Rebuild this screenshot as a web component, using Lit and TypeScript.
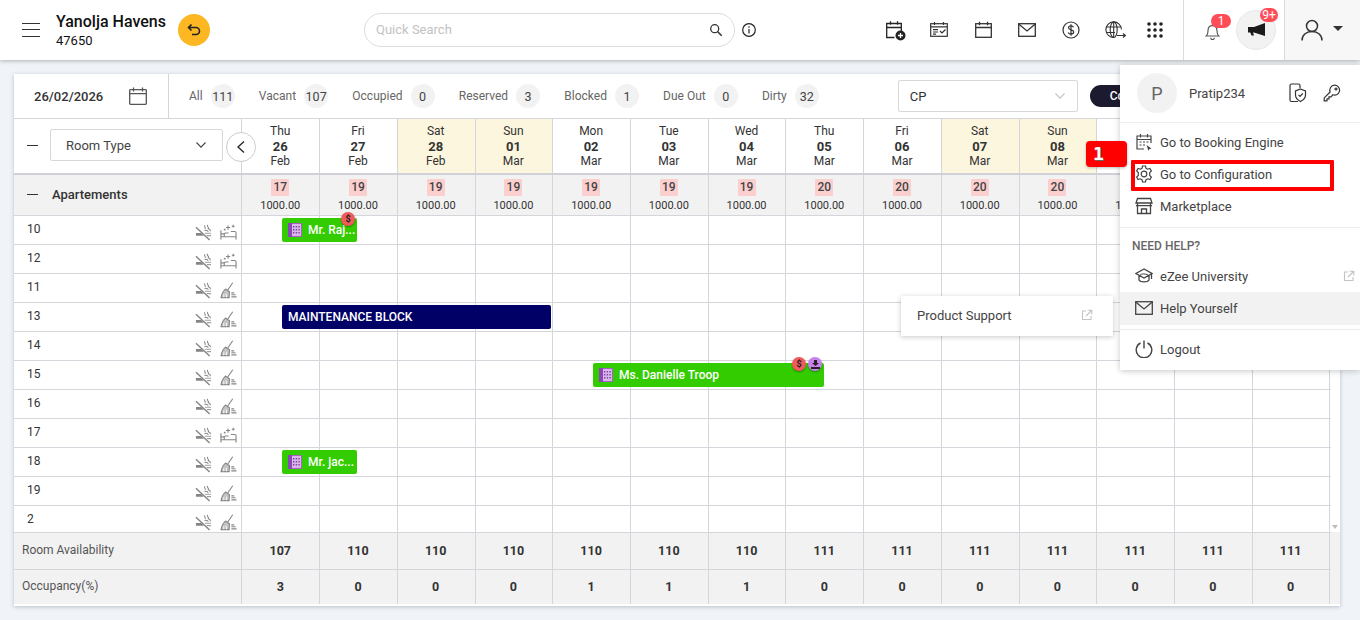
import { LitElement, html, css } from "lit";
import { customElement } from "lit/decorators.js";
import { styleMap } from "lit/directives/style-map.js";

const days = [
  ["Thu","26","Feb",17,107,3],["Fri","27","Feb",19,110,0],["Sat","28","Feb",19,110,0],["Sun","01","Mar",19,110,0],
  ["Mon","02","Mar",19,110,1],["Tue","03","Mar",19,110,1],["Wed","04","Mar",19,110,1],["Thu","05","Mar",20,111,0],
  ["Fri","06","Mar",20,111,0],["Sat","07","Mar",20,111,0],["Sun","08","Mar",20,111,0],["Mon","09","Mar",20,111,0],
  ["Tue","10","Mar",20,111,0],["Wed","11","Mar",20,111,0],
] as const;
const rooms: [string, boolean][] = [["10",true],["12",true],["11",false],["13",false],["14",false],["15",false],["16",false],["17",true],["18",false],["19",false],["2",false]];
const tabs: [string,string][] = [["All","111"],["Vacant","107"],["Occupied","0"],["Reserved","3"],["Blocked","1"],["Due Out","0"],["Dirty","32"]];
const bars: Record<string,{x:number;w:number;t:string;navy?:boolean;dots?:string[]}> = {
  "10": {x:268,w:75,t:"Mr. Raj...",dots:["s"]},
  "13": {x:268,w:269,t:"MAINTENANCE BLOCK",navy:true},
  "15": {x:579,w:231,t:"Ms. Danielle Troop",dots:["s","u"]},
  "18": {x:268,w:75,t:"Mr. jac..."},
};

const noSmoke = html`<svg class="ri" viewBox="0 0 18 18" fill="none" stroke="#858585" stroke-width="1.300"><path d="M1 3.500 15.500 17" stroke-width="1.500"/><path d="M1 9.500h5.500l3 3H1z" fill="#858585" stroke="none"/><path d="M10.500 9.800h6.500M12.500 12.300h4.500" stroke-width="1.100" stroke="#a0a0a0"/><path d="M10.500 1.500c-1.400 1.400 1.400 2 0 3.600M13.500 1c-1.600 1.400 1.800 2.400.6 4 1.400.3 2.300 1 2.300 2.600M10 7c1.600-.6 3.500-.3 4 1.200" stroke-width="1.100"/></svg>`;
const broom = html`<svg class="ri" viewBox="0 0 18 18" fill="none" stroke="#858585" stroke-width="1.200"><path d="M13.500 .8 8.200 8.500"/><path d="M5.800 7.500 10 10.300 9.600 16.500H1.200C1.800 12.500 3.500 9.300 5.800 7.500Z" fill="#c4c4c4"/><path d="M4 16.300V13M6.800 16.300v-3.800" stroke="#fff" stroke-width=".9"/><path d="M12 11.500h3M12 13.500h4.500M12 15.800h5.500"/></svg>`;
const bed = html`<svg class="ri" viewBox="0 0 18 18" fill="none" stroke="#858585" stroke-width="1.200"><path d="M1 6.500V16.500M1 13.500H17V16.500M17 13.500V9.500C17 8.500 16.300 8 15.500 8H11.500M1 10.500H4.500"/><path d="M4.500 13.500V10.700C4.500 10 5 9.500 5.700 9.500H9"/><path d="M8.500 1.500v4.500M6.300 3.700h4.500M14 .8v3M12.500 2.300h3M5 5v2M4 6h2" stroke-width="1.100"/></svg>`;
const building = html`<svg class="bi" viewBox="0 0 14 14"><rect width="14" height="14" rx="1" fill="#a45fc9"/><rect x="0" y="0" width="4" height="14" fill="#8d45b8"/><rect x="4" y="1" width="9" height="12" fill="#d7b8e8"/><path d="M5 3h1.400v1.400H5zM7.700 3h1.400v1.400H7.700zM10.400 3h1.400v1.400h-1.400zM5 6h1.400v1.400H5zM7.700 6h1.400v1.400H7.700zM10.400 6h1.400v1.400h-1.400zM5 9h1.400v1.400H5zM7.700 9h1.400v1.400H7.700zM10.400 9h1.400v1.400h-1.400z" fill="#8540ad"/></svg>`;
const ext = html`<svg class="ext" viewBox="0 0 12 12" fill="none" stroke="#c4c4c4" stroke-width="1.100"><path d="M5 2H1.500v8.500H10V7M6.500 1.200h4.300v4.300M10.500 1.500 5 7"/></svg>`;
const chev = html`<svg class="chev" viewBox="0 0 12 8" fill="none" stroke="currentColor" stroke-width="1.100"><path d="M1.500 1.500 6 6.200l4.500-4.700"/></svg>`;
const calendar = html`<svg class="ic18" viewBox="0 0 18 18" fill="none" stroke="#555" stroke-width="1.300"><rect x=".7" y="2.700" width="16.600" height="14.600" rx=".8"/><path d="M.7 6.700h16.600M4.500 .5v4M13.500 .5v4"/></svg>`;

@customElement("app-root")
export class AppRoot extends LitElement {
  static styles = css`
    :host { display:block; width:1360px; height:620px; position:relative; overflow:hidden; background:#f0f4f8; font-family:Roboto,"Liberation Sans",sans-serif; color:#333; font-size:13px; }
    svg { display:block; flex:none; }
    .top { height:60px; background:#fff; display:flex; align-items:center; padding-left:22px; box-shadow:0 1px 4px rgba(0,0,0,.28); position:relative; z-index:2; }
    .burger { width:18px; height:14px; border-top:1.500px solid #333; border-bottom:1.500px solid #333; position:relative; box-sizing:border-box; }
    .burger::after { content:""; position:absolute; left:0; right:0; top:4.500px; height:1.500px; background:#333; }
    .hotel { margin-left:16px; width:122px; color:#111; }
    .hotel b { display:block; font-size:16px; font-weight:500; line-height:20px; white-space:nowrap; }
    .hotel span { display:block; font-size:13px; line-height:16px; margin-top:1px; }
    .back { width:32px; height:32px; border-radius:50%; background:#fdb722; display:flex; align-items:center; justify-content:center; }
    .search { width:371px; height:34px; box-sizing:border-box; margin-left:154px; border:1px solid #dcdcdc; border-radius:17px; display:flex; align-items:center; justify-content:space-between; padding:0 11px 1px 11px; color:#c2c2c2; font-size:13px; }
    .info { margin-left:6px; }
    .tools { display:flex; margin-left:116px; align-items:center; }
    .tool { width:44px; display:flex; justify-content:center; color:#222; }
    .tool.last { margin-left:-4px; }
    .sep { width:1px; height:60px; background:#dcdcdc; margin-left:6px; }
    .bell { width:52px; position:relative; display:flex; justify-content:center; padding:2px 0 0 4px; box-sizing:border-box; }
    .count { position:absolute; background:#ff4d57; color:#fff; border-radius:8px; font-size:12px; line-height:14px; height:14px; text-align:center; }
    .bell .count { left:27px; top:-7px; width:20px; }
    .mega { width:40px; height:40px; border-radius:50%; background:#f2f2f2; border:1px solid #e8e8e8; box-sizing:border-box; position:relative; display:flex; align-items:center; justify-content:center; }
    .mega .count { left:23px; top:-3px; width:18px; }
    .sep2 { margin-left:8px; }
    .me { flex:1; height:60px; background:#f7f7f7; display:flex; align-items:center; padding-left:16px; gap:10px; }
    .caret { width:0; height:0; border:5px solid transparent; border-top:5.500px solid #333; border-bottom:0; margin-top:-4px; }

    .card { position:absolute; left:14px; top:74px; width:1326px; height:532px; background:#fff; box-shadow:0 1px 4px rgba(60,70,100,.3); overflow:hidden; }
    .filters { height:44px; border-bottom:1px solid #d4d6dc; display:flex; align-items:center; }
    .date { width:155px; height:44px; box-sizing:border-box; border-right:1px solid #d4d6dc; display:flex; align-items:center; padding-left:20px; font-weight:500; color:#333; }
    .date svg { margin-left:26px; }
    .ic18 { width:18px; height:18px; }
    .chev { width:12px; height:8px; }
    .tab { display:flex; align-items:center; gap:8px; margin-left:24.200px; color:#666; font-size:12px; }
    .date + .tab { margin-left:20px; }
    .tab i { font-style:normal; width:24px; height:24px; border-radius:50%; background:#f2f2f2; color:#444; display:flex; align-items:center; justify-content:center; font-size:12.500px; }
    .cp { margin-left:79px; width:180px; height:32px; box-sizing:border-box; border:1px solid #d8d8d8; border-radius:2px; display:flex; align-items:center; justify-content:space-between; padding:0 11px; color:#333; }
    .cp .chev { color:#c4c4c4; }
    .btn { margin-left:12px; height:22px; width:100px; border-radius:11px; background:#1c1a2e; color:#fff; padding-left:20px; box-sizing:border-box; line-height:22px; font-size:12px; font-weight:500; }

    .cols { display:grid; grid-template-columns:228.400px repeat(14,77.720px); width:1316.500px; }
    .cols > div { border-right:1px solid #d4d6dc; box-sizing:border-box; }
    .heads { height:56px; border-bottom:2px solid #cfd1d6; box-sizing:border-box; position:relative; }
    .heads > div { height:54px; }
    .day { text-align:center; font-size:12px; line-height:15px; padding:5px 1px 0 0; color:#333; }
    .day b { display:block; font-size:13px; }
    .day.we { background:#fdf6df; }
    .dash { width:11px; height:1px; background:#333; flex:none; }
    .hleft { display:flex; align-items:center; padding:0 0 2px 13px; }
    .rtype { margin-left:12px; width:173px; height:32px; box-sizing:border-box; border:1px solid #d8d8d8; border-radius:2px; display:flex; align-items:center; justify-content:space-between; padding:0 15px; color:#444; white-space:nowrap; }
    .heads > .circle { position:absolute; left:212px; top:13px; width:30px; height:30px; box-sizing:border-box; border-radius:50%; background:#fff; border:1px solid #ccc; display:flex; align-items:center; justify-content:center; }
    .group { height:41px; background:#f2f2f2; border-bottom:1px solid #d4d6dc; box-sizing:border-box; }
    .group > div { height:40px; }
    .gleft { display:flex; align-items:center; padding:0 0 2px 13px; gap:14px; font-weight:500; color:#333; }
    .rate { text-align:center; font-size:11px; color:#333; padding:4px 1px 0 0; line-height:14px; }
    .rate em { font-style:normal; font-weight:500; font-size:12px; display:block; width:18px; height:17px; line-height:17px; margin:0 auto 3px; background:#fccfcf; border-radius:1px; color:#444; }
    .body { height:316px; position:relative; clip-path:inset(-10px 0 0 0); }
    .row { height:29px; box-sizing:border-box; border-bottom:1px solid #d4d6dc; position:relative; }
    .row > div { height:28px; }
    .rleft { display:flex; align-items:flex-start; padding:5px 0 0 13px; font-size:12px; line-height:16px; color:#333; }
    .rleft span { flex:1; }
    .ri { width:17px; height:17px; margin-top:3px; }
    .ri + .ri { margin-left:8px; margin-right:4px; }
    .row > .bar { position:absolute; top:2px; height:24px; background:#33cc00; color:#fff; border-radius:2px; display:flex; align-items:center; gap:6px; padding-left:6px; box-sizing:border-box; font-size:12px; font-weight:500; white-space:nowrap; border:0; }
    .row > .bar.navy { background:#000066; }
    .bi { width:14px; height:14px; }
    .dots { position:absolute; right:2px; top:-6px; display:flex; gap:2px; }
    .dot { width:14px; height:14px; border-radius:50%; background:#f05a5a; box-shadow:0 1px 2px rgba(0,0,0,.35); display:flex; align-items:center; justify-content:center; color:#222; font-size:9px; font-weight:700; line-height:14px; }
    .dot.u { background:#c980ea; }
    .foot { background:#f2f2f2; height:72px; }
    .foot .cols { height:35px; box-sizing:border-box; border-top:1px solid #d4d6dc; }
    .foot .cols:first-child { height:37px; }
    .foot .cols > div { display:flex; align-items:center; justify-content:center; font-weight:700; font-size:12.500px; color:#333; padding:0 1px 2px 0; }
    .foot .cols > div.fl { justify-content:flex-start; padding-left:8px; font-weight:400; font-size:12px; color:#555; }
    .scroll { position:absolute; right:2px; top:309px; width:0; height:0; border:3.500px solid transparent; border-top:4px solid #bdbdbd; border-bottom:0; }

    .menu { position:absolute; left:1120px; top:65px; width:240px; height:305px; background:#fff; box-shadow:0 1px 6px rgba(0,0,0,.22); z-index:5; display:flex; flex-direction:column; font-size:13px; color:#444; }
    .prof { height:58px; box-sizing:border-box; border-bottom:1px solid #ececec; display:flex; align-items:center; padding:0 19px 1px 17px; flex:none; }
    .ava { width:40px; height:40px; border-radius:50%; background:#f2f2f2; color:#666; font-size:18px; display:flex; align-items:center; justify-content:center; }
    .pname { margin-left:12px; flex:1; }
    .prof svg + svg { margin-left:16px; }
    .mi { height:32px; display:flex; align-items:center; padding-left:15px; gap:7px; flex:none; position:relative; }
    .mi svg.m { width:18px; height:18px; color:#444; }
    .mi.hover { background:#f2f2f2; height:33px; padding-bottom:1px; box-sizing:border-box; }
    .ext { width:12px; height:12px; }
    .mi .ext { position:absolute; right:5px; top:10px; }
    .line { height:1px; background:#ececec; flex:none; }
    .need { height:32px; line-height:37px; padding-left:12px; font-size:12px; font-weight:500; color:#666; flex:none; }
    .gap { height:3px; flex:none; }
    .mt5 { margin-top:5px; }
    .mt4 { margin-top:4px; }
    .pop { position:absolute; left:901px; top:296px; width:212px; height:40px; background:#fff; box-shadow:0 1px 5px rgba(0,0,0,.22); z-index:4; display:flex; align-items:center; justify-content:space-between; padding:0 20px 2px 16px; box-sizing:border-box; color:#444; }
    .mark { position:absolute; left:1131px; top:160px; width:203px; height:31px; box-sizing:border-box; border:4px solid #f00; border-radius:1px; z-index:6; }
    .num { position:absolute; left:1086px; top:141px; width:41px; height:26px; background:#f00; border-radius:4px; z-index:6; box-shadow:0 1px 3px rgba(0,0,0,.25); color:#fff; font:700 18px/26px "DejaVu Sans Mono",monospace; padding-left:7px; box-sizing:border-box; text-shadow:1px 1px 0 #666; }
  `;

  render() {
    return html`
      <div class="top">
        <div class="burger"></div>
        <div class="hotel"><b>Yanolja Havens</b><span>47650</span></div>
        <div class="back"><svg width="16" height="16" viewBox="0 0 16 16" fill="none" stroke="#222" stroke-width="1.600"><path d="M5.500 2.500 2.500 5.500l3 3M2.800 5.500H10a3.300 3.300 0 0 1 0 7H6"/></svg></div>
        <div class="search"><span>Quick Search</span><svg width="14" height="14" viewBox="0 0 14 14" fill="none" stroke="#333" stroke-width="1.300"><circle cx="5.700" cy="5.700" r="4"/><path d="M8.700 8.700 12.700 12.700" stroke-width="1.600"/></svg></div>
        <svg class="info" width="16" height="16" viewBox="0 0 16 16" fill="none" stroke="#222" stroke-width="1.200"><circle cx="8" cy="8" r="6.300"/><path d="M8 7v4.500M8 4.300v1.400"/></svg>
        <div class="tools">
          <div class="tool"><svg width="21" height="21" viewBox="0 0 21 21" fill="none" stroke="#222" stroke-width="1.300"><path d="M9.500 17.500H1.700V3.500h14.600v7.500M1.700 7.500h14.600M5.500 1.200v3.500M12.500 1.200v3.500"/><circle cx="15.500" cy="15.500" r="5" fill="#222" stroke="none"/><path d="M15.500 13v5M13 15.500h5" stroke="#fff"/></svg></div>
          <div class="tool"><svg width="18" height="18" viewBox="0 0 18 18" fill="none" stroke="#333" stroke-width="1.200"><rect x=".7" y="2.700" width="16.600" height="12.600"/><path d="M.7 5.800h16.600M4.500 1v3M13.500 1v3M3 8.700h5M3 11h5M3 13.200h3M10 10l2 2 3.500-3.500"/></svg></div>
          <div class="tool"><svg width="17" height="18" viewBox="0 0 17 18" fill="none" stroke="#333" stroke-width="1.300"><rect x=".7" y="2.700" width="15.600" height="13.600"/><path d="M.7 6.500h15.600M4.500 .8v3.500M12.500 .8v3.500"/></svg></div>
          <div class="tool"><svg width="18" height="14" viewBox="0 0 18 14" fill="none" stroke="#333" stroke-width="1.300"><rect x=".7" y=".7" width="16.600" height="12.600"/><path d="M.7 1 9 8l8.300-7"/></svg></div>
          <div class="tool"><svg width="18" height="18" viewBox="0 0 18 18" fill="none" stroke="#333" stroke-width="1.200"><circle cx="9" cy="9" r="8"/><path d="M11.500 6.200C11 5 10 4.800 9 4.800c-1.500 0-2.500.8-2.500 2 0 2.800 5.200 1.500 5.200 4.300 0 1.300-1.200 2-2.700 2-1.300 0-2.300-.5-2.800-1.700M9 3.200v11.600"/></svg></div>
          <div class="tool"><svg width="21" height="18" viewBox="0 0 21 18" fill="none" stroke="#333" stroke-width="1.100"><path d="M16.500 8.500a7.800 7.800 0 1 0-7.500 8"/><ellipse cx="8.700" cy="8.700" rx="3.500" ry="7.800"/><path d="M1 6h15.500M1 11.500h9M8.700 1v15.500"/><path d="M12 14.500h8M18 12.500l2.300 2-2.300 2" stroke-width="1.200"/></svg></div>
          <div class="tool last"><svg width="16" height="16" viewBox="0 0 16 16" fill="#222"><circle cx="2" cy="2" r="1.800"/><circle cx="8" cy="2" r="1.800"/><circle cx="14" cy="2" r="1.800"/><circle cx="2" cy="8" r="1.800"/><circle cx="8" cy="8" r="1.800"/><circle cx="14" cy="8" r="1.800"/><circle cx="2" cy="14" r="1.800"/><circle cx="8" cy="14" r="1.800"/><circle cx="14" cy="14" r="1.800"/></svg></div>
        </div>
        <div class="sep"></div>
        <div class="bell">
          <svg width="15" height="17" viewBox="0 0 16 19" fill="none" stroke="#555" stroke-width="1.300"><path d="M1 14.500h14c-1.800-1.500-2-3-2-6C13 5 11 3 8 3S3 5 3 8.500c0 3-.2 4.500-2 6ZM6 16.500a2 2 0 0 0 4 0M8 1v2"/></svg>
          <div class="count">1</div>
        </div>
        <div class="mega">
          <svg width="17" height="14" viewBox="0 0 17 14" fill="#1a1a1a"><path d="M0 4h6l11-4v13L6 9.500H5l1 3H3.500L2.300 9.500H0z"/></svg>
          <div class="count">9+</div>
        </div>
        <div class="sep sep2"></div>
        <div class="me">
          <svg width="22" height="22" viewBox="0 0 22 22" fill="none" stroke="#333" stroke-width="1.500"><circle cx="11" cy="7" r="5.500"/><path d="M1 21.500c0-5.500 4-9 10-9s10 3.500 10 9"/></svg>
          <div class="caret"></div>
        </div>
      </div>

      <div class="card">
        <div class="filters">
          <div class="date">26/02/2026 ${calendar}</div>
          ${tabs.map(([t, n]) => html`<div class="tab">${t}<i>${n}</i></div>`)}
          <div class="cp">CP ${chev}</div>
          <div class="btn">Compact</div>
        </div>
        <div class="cols heads">
          <div class="hleft"><div class="dash"></div><div class="rtype">Room Type ${chev}</div></div>
          ${days.map((d) => html`<div class="day ${d[0] === "Sat" || d[0] === "Sun" ? "we" : ""}">${d[0]}<b>${d[1]}</b>${d[2]}</div>`)}
          <div class="circle"><svg width="10" height="14" viewBox="0 0 10 14" fill="none" stroke="#222" stroke-width="1.300"><path d="M8 1.500 2 7l6 5.500"/></svg></div>
        </div>
        <div class="cols group">
          <div class="gleft"><div class="dash"></div>Apartements</div>
          ${days.map((d) => html`<div class="rate"><em>${d[3]}</em>1000.00</div>`)}
        </div>
        <div class="body">
          ${rooms.map(([r, clean]) => {
            const b = bars[r];
            return html`<div class="cols row">
              <div class="rleft"><span>${r}</span>${noSmoke}${clean ? bed : broom}</div>
              ${days.map(() => html`<div></div>`)}
              ${b ? html`<div class="bar ${b.navy ? "navy" : ""}" style=${styleMap({ left: b.x + "px", width: b.w + "px" })}>
                ${b.navy ? "" : building}${b.t}
                ${b.dots ? html`<div class="dots">${b.dots.map((k) => k === "s"
                  ? html`<div class="dot">$</div>`
                  : html`<div class="dot u"><svg width="9" height="9" viewBox="0 0 9 9" fill="#222"><path d="M3 0h3v3h2L4.500 6 1 3h2zM0 7h9v2H0z"/></svg></div>`)}</div>` : ""}
              </div>` : ""}
            </div>`;
          })}
          <div class="scroll"></div>
        </div>
        <div class="foot">
          <div class="cols"><div class="fl">Room Availability</div>${days.map((d) => html`<div>${d[4]}</div>`)}</div>
          <div class="cols"><div class="fl">Occupancy(%)</div>${days.map((d) => html`<div>${d[5]}</div>`)}</div>
        </div>
      </div>

      <div class="pop">Product Support ${ext}</div>

      <div class="menu">
        <div class="prof">
          <div class="ava">P</div><div class="pname">Pratip234</div>
          <svg width="18" height="20" viewBox="0 0 18 20" fill="none" stroke="#333" stroke-width="1.200"><path d="M9 18.500H2.500a1.500 1.500 0 0 1-1.500-1.500V2.500A1.500 1.500 0 0 1 2.500 1h7A1.500 1.500 0 0 1 11 2.500V5"/><path d="M11.500 6 16.500 8v4c0 3-2 5-5 6.500-3-1.500-5-3.500-5-6.500V8z"/><path d="M9.500 11.800l1.500 1.500 2.800-2.800"/></svg>
          <svg width="18" height="18" viewBox="0 0 18 18" fill="none" stroke="#333" stroke-width="1.200"><path d="M11.500 1.200a5 5 0 0 1 .2 10c-.8 0-1.300-.1-1.900-.4L8 12.800H6v2H4v2H1.200v-2.900l5.900-5.900a5 5 0 0 1 4.400-6.800Z"/><circle cx="13" cy="5" r="1"/></svg>
        </div>
        <div class="gap"></div>
        <div class="mi"><svg class="m" viewBox="0 0 18 18" fill="none" stroke="currentColor" stroke-width="1.200"><path d="M9 16H2V3h14v7M2 6.500h14M5.500 1v3.500M12.500 1v3.500M4.500 9h2M8 9h2M11.500 9h2M4.500 12h2M8 12h2"/><path d="M11.500 12l5 3.500-2 .6-1 1.600z" fill="currentColor" stroke="none"/></svg>Go to Booking Engine</div>
        <div class="mi"><svg class="m" viewBox="0 0 18 18" fill="none" stroke="currentColor" stroke-width="1.200"><circle cx="9" cy="9" r="2.800"/><path d="M7.500 1h3l.5 2.300 1.700.9 2.200-.8 1.500 2.600-1.700 1.600v2.800l1.700 1.600-1.500 2.600-2.200-.8-1.700.9-.5 2.300h-3L7 14.700l-1.700-.9-2.200.8-1.500-2.600 1.700-1.600V7.600L1.600 6l1.500-2.600 2.200.8L7 3.300z"/></svg>Go to Configuration</div>
        <div class="mi"><svg class="m" viewBox="0 0 18 18" fill="none" stroke="currentColor" stroke-width="1.300"><path d="M2.500 1.500h13l1.500 4.500H1zM2.500 6v10.500h13V6M1 6h16M1 8.700h16M6.500 16.500v-4.500h5v4.500"/></svg>Marketplace</div>
        <div class="line mt5"></div>
        <div class="need">NEED HELP?</div>
        <div class="mi"><svg class="m" viewBox="0 0 18 18" fill="none" stroke="currentColor" stroke-width="1.300"><path d="M9 2 1 6.500l8 4.500 8-4.500zM4 8.500v4.500c1.500 2.500 8.500 2.500 10 0V8.500M16.500 7v5"/><path d="M5 8c2-1.500 5-1.500 8 0" stroke-width="1"/></svg>eZee University ${ext}</div>
        <div class="mi hover"><svg class="m" viewBox="0 0 18 18" fill="none" stroke="currentColor" stroke-width="1.300"><rect x=".7" y="2.700" width="16.600" height="12.600"/><path d="M.7 3 9 10l8.300-7"/></svg>Help Yourself</div>
        <div class="line mt4"></div>
        <div class="gap"></div>
        <div class="mi"><svg class="m" viewBox="0 0 18 18" fill="none" stroke="currentColor" stroke-width="1.400"><path d="M5.500 3a7.800 7.800 0 1 0 7 0M9 .5v8"/></svg>Logout</div>
      </div>

      <div class="num">1</div>
      <div class="mark"></div>
    `;
  }
}
